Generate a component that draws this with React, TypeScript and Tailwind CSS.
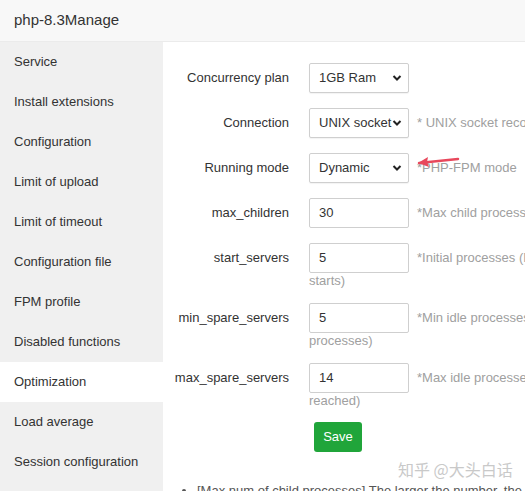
import React from 'react'

const menu = [
  'Service',
  'Install extensions',
  'Configuration',
  'Limit of upload',
  'Limit of timeout',
  'Configuration file',
  'FPM profile',
  'Disabled functions',
  'Optimization',
  'Load average',
  'Session configuration',
]

const Chevron = () => (
  <svg width="10" height="8" viewBox="0 0 10 8" className="shrink-0">
    <path d="M1.5 2 L5 5.5 L8.5 2" fill="none" stroke="#222" strokeWidth="2" />
  </svg>
)

const SelectBox = ({ value }: { value: string }) => (
  <div className="flex h-[30px] w-[100px] items-center justify-between rounded-[2px] border border-[#cfcfcf] bg-white pl-[9px] pr-[6px] text-[13px] text-[#333] shadow-[0_1px_1px_rgba(0,0,0,0.05)]">
    <span className="whitespace-nowrap">{value}</span>
    <Chevron />
  </div>
)

const InputBox = ({ value }: { value: string }) => (
  <div className="flex h-[30px] w-[100px] items-center rounded-[2px] border border-[#cfcfcf] bg-white pl-[9px] text-[13px] text-[#333]">
    {value}
  </div>
)

const Row = ({
  label,
  children,
  help,
  wrap,
}: {
  label: string
  children: React.ReactNode
  help?: string
  wrap?: string
}) => (
  <div className="mb-[15px]">
    <div className="flex items-center">
      <div className="w-[125px] shrink-0 text-right text-[13px] text-[#333]">{label}</div>
      <div className="ml-[20px]">{children}</div>
      {help && (
        <div className="ml-[8px] whitespace-nowrap text-[13px] text-[#a0a0a0]">{help}</div>
      )}
    </div>
    {wrap && (
      <div className="ml-[145px] h-[15px] text-[13px] leading-[15px] text-[#a0a0a0]">{wrap}</div>
    )}
  </div>
)

export default function App() {
  return (
    <div className="relative h-[491px] w-[525px] overflow-hidden bg-white font-['Liberation_Sans',Arial,sans-serif]">
      <div className="flex h-[42px] items-center border-b border-[#ebebeb] bg-[#f8f8f8] pl-[14px] text-[15px] text-[#333]">
        php-8.3Manage
      </div>
      <div className="flex h-[449px]">
        {/* sidebar */}
        <div className="w-[163px] shrink-0 bg-[#f0f0f0]">
          {menu.map((m) => (
            <div
              key={m}
              className={
                m === 'Optimization'
                  ? 'flex h-[40px] items-center bg-white pl-[14px] text-[13px] text-[#333]'
                  : 'flex h-[40px] items-center pl-[14px] text-[13px] text-[#333]'
              }
            >
              {m}
            </div>
          ))}
        </div>

        {/* content */}
        <div className="min-w-0 flex-1 pl-[1px] pt-[21px]">
          <Row label="Concurrency plan">
            <SelectBox value="1GB Ram" />
          </Row>
          <Row label="Connection" help="* UNIX socket recommended">
            <SelectBox value="UNIX socket" />
          </Row>
          <Row label="Running mode" help="*PHP-FPM mode">
            <SelectBox value="Dynamic" />
          </Row>
          <Row label="max_children" help="*Max child processes allowed">
            <InputBox value="30" />
          </Row>
          <Row label="start_servers" help="*Initial processes (Number of processes when PHP-FPM" wrap="starts)">
            <InputBox value="5" />
          </Row>
          <Row label="min_spare_servers" help="*Min idle processes (Min num of idle" wrap="processes)">
            <InputBox value="5" />
          </Row>
          <Row label="max_spare_servers" help="*Max idle processes (Kill when max is" wrap="reached)">
            <InputBox value="14" />
          </Row>
          <div className="ml-[150px] mt-[-1px]">
            <button className="h-[30px] w-[48px] rounded-[3px] bg-[#20a53a] text-[13px] text-white">
              Save
            </button>
          </div>
          <ul className="ml-[17px] mt-[29px] list-disc pl-[16px] text-[13px] leading-[20px] text-[#555]">
            <li className="whitespace-nowrap">
              [Max num of child processes] The larger the number, the stronger the concurrency
            </li>
          </ul>
        </div>
      </div>

      {/* red arrow annotation */}
      <svg className="absolute left-[414px] top-[151px]" width="50" height="20" viewBox="0 0 50 20">
        <path d="M5 12 L44 8" stroke="#e8485c" strokeWidth="2.5" strokeLinecap="round" />
        <path d="M4 12 L14 6 L13 11 L15 16 Z" fill="#e8485c" />
      </svg>

      {/* watermark */}
      <div className="absolute left-[398px] top-[457px] whitespace-nowrap font-['Noto_Sans_CJK_SC',sans-serif] text-[16px] text-[#c9c9c9]">
        知乎 @大头白话
      </div>
    </div>
  )
}
